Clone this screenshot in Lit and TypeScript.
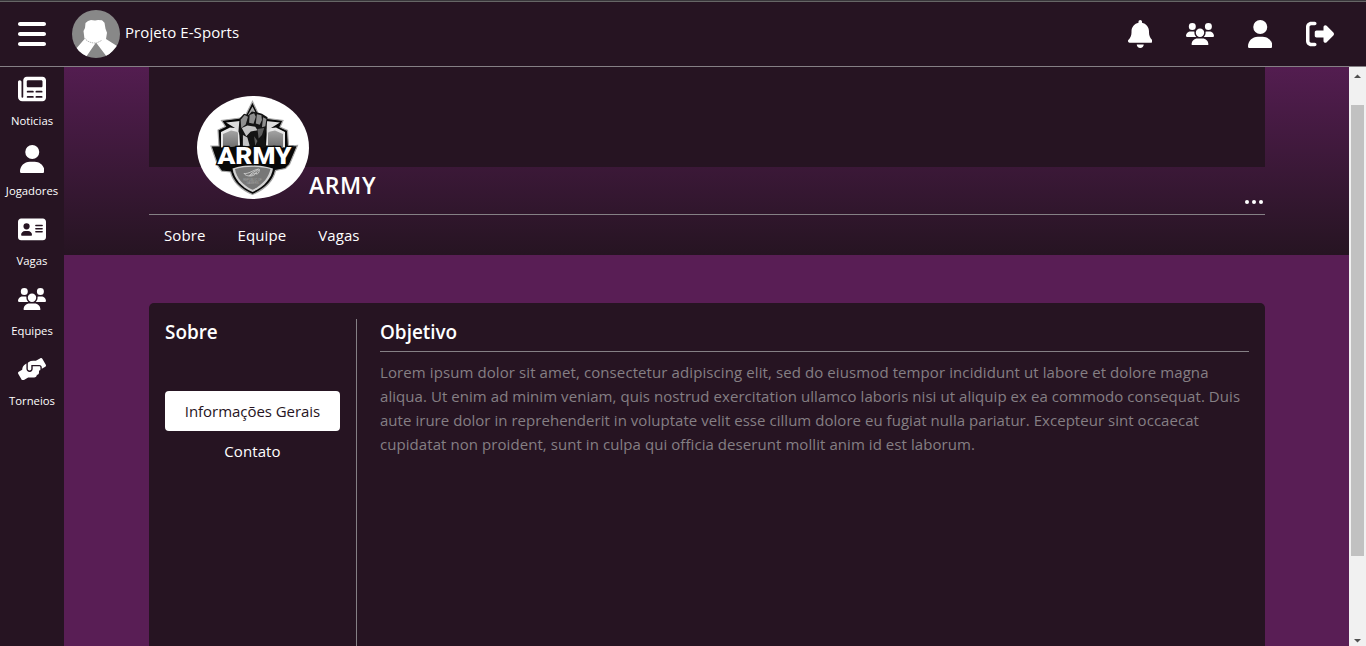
import { LitElement, html, css, svg } from "lit";
import { customElement, property } from "lit/decorators.js";

const ICONS: Record<string, { box: string; d: string }> = {
  bars: {
    box: "0 0 448 512",
    d: "M0 96C0 78.3 14.3 64 32 64H416c17.7 0 32 14.3 32 32s-14.3 32-32 32H32C14.3 128 0 113.7 0 96zM0 256c0-17.7 14.3-32 32-32H416c17.7 0 32 14.3 32 32s-14.3 32-32 32H32c-17.7 0-32-14.3-32-32zM448 416c0 17.7-14.3 32-32 32H32c-17.7 0-32-14.3-32-32s14.3-32 32-32H416c17.7 0 32 14.3 32 32z",
  },
  bell: {
    box: "0 0 448 512",
    d: "M224 0c-17.7 0-32 14.3-32 32V51.2C119 66 64 130.6 64 208v18.8c0 47-17.3 92.4-48.5 127.6l-7.4 8.3c-8.4 9.4-10.4 22.9-5.3 34.4S19.4 416 32 416H416c12.6 0 24-7.4 29.2-18.9s3.1-25-5.3-34.4l-7.4-8.3C401.3 319.2 384 273.9 384 226.8V208c0-77.4-55-142-128-156.8V32c0-17.7-14.3-32-32-32zm45.3 493.3c12-12 18.7-28.3 18.7-45.3H160c0 17 6.7 33.3 18.7 45.3s28.3 18.7 45.3 18.7s33.3-6.7 45.3-18.7z",
  },
  users: {
    box: "0 0 640 512",
    d: "M144 0a80 80 0 1 1 0 160A80 80 0 1 1 144 0zM512 0a80 80 0 1 1 0 160A80 80 0 1 1 512 0zM0 298.7C0 239.8 47.8 192 106.7 192h42.7c15.9 0 31 3.5 44.6 9.7c-1.3 7.2-1.9 14.7-1.9 22.3c0 38.2 16.8 72.5 43.3 96H21.3C9.6 320 0 310.4 0 298.7zM405.3 320h-.7c26.6-23.5 43.3-57.8 43.3-96c0-7.6-.7-15-1.9-22.3c13.6-6.3 28.7-9.7 44.6-9.7h42.7C592.2 192 640 239.8 640 298.7c0 11.8-9.6 21.3-21.3 21.3H405.3zM224 224a96 96 0 1 1 192 0 96 96 0 1 1 -192 0zM128 485.3C128 411.7 187.7 352 261.3 352H378.7C452.3 352 512 411.7 512 485.3c0 14.7-11.9 26.7-26.7 26.7H154.7c-14.7 0-26.7-11.9-26.7-26.7z",
  },
  user: {
    box: "0 0 448 512",
    d: "M224 256A128 128 0 1 0 224 0a128 128 0 1 0 0 256zm-45.7 48C79.8 304 0 383.8 0 482.3C0 498.7 13.3 512 29.7 512H418.3c16.4 0 29.7-13.3 29.7-29.7C448 383.8 368.2 304 269.7 304H178.3z",
  },
  exit: {
    box: "0 0 512 512",
    d: "M377.9 105.9L500.7 228.7c7.2 7.2 11.3 17.1 11.3 27.3s-4.1 20.1-11.3 27.3L377.9 406.1c-6.4 6.4-15 9.9-24 9.9c-18.7 0-33.9-15.2-33.9-33.9l0-62.1-128 0c-17.7 0-32-14.3-32-32l0-64c0-17.7 14.3-32 32-32l128 0 0-62.1c0-18.7 15.2-33.9 33.9-33.9c9 0 17.6 3.6 24 9.9zM160 96L96 96c-17.7 0-32 14.3-32 32l0 256c0 17.7 14.3 32 32 32l64 0c17.7 0 32 14.3 32 32s-14.3 32-32 32l-64 0c-53 0-96-43-96-96L0 128C0 75 43 32 96 32l64 0c17.7 0 32 14.3 32 32s-14.3 32-32 32z",
  },
  news: {
    box: "0 0 512 512",
    d: "M96 96c0-35.3 28.7-64 64-64H448c35.3 0 64 28.7 64 64V416c0 35.3-28.7 64-64 64H80c-44.2 0-80-35.8-80-80V128c0-17.7 14.3-32 32-32s32 14.3 32 32V400c0 8.8 7.2 16 16 16s16-7.2 16-16V96zm64 24v80c0 13.3 10.7 24 24 24H424c13.3 0 24-10.7 24-24V120c0-13.3-10.7-24-24-24H184c-13.3 0-24 10.7-24 24zm16 168a16 16 0 0 0 0 32h96a16 16 0 0 0 0-32zm160 0a16 16 0 0 0 0 32h96a16 16 0 0 0 0-32zM176 384a16 16 0 0 0 0 32h96a16 16 0 0 0 0-32zm160 0a16 16 0 0 0 0 32h96a16 16 0 0 0 0-32z",
  },
  card: {
    box: "0 0 576 512",
    d: "M64 32C28.7 32 0 60.7 0 96V416c0 35.3 28.7 64 64 64H512c35.3 0 64-28.7 64-64V96c0-35.3-28.7-64-64-64H64zm80 256h64c44.2 0 80 35.8 80 80c0 8.8-7.2 16-16 16H80c-8.8 0-16-7.2-16-16c0-44.2 35.8-80 80-80zm-32-96a64 64 0 1 1 128 0 64 64 0 1 1 -128 0zM368 160H496a16 16 0 0 1 0 32H368a16 16 0 0 1 0-32zM368 224H496a16 16 0 0 1 0 32H368a16 16 0 0 1 0-32zM368 288H496a16 16 0 0 1 0 32H368a16 16 0 0 1 0-32z",
  },
  hands: {
    box: "0 0 640 512",
    d: "M488 191.1h-152l0 51.86c0 37.66-27.08 72-64.55 75.77c-43.09 4.333-79.45-29.42-79.45-71.62V126.4l-24.51 14.73C123.2 167.8 96.04 215.7 96.04 267.5L16.04 313.8c-15.25 8.751-20.63 28.38-11.75 43.63l80 138.6c8.875 15.25 28.5 20.5 43.75 11.75l103.4-59.75h136.6c35.25 0 64-28.75 64-64c26.51 0 48-21.49 48-48V288h8c13.25 0 24-10.75 24-24l0-48.9C512 201.8 501.3 191.1 488 191.1zM635.7 154.5l-79.95-138.6c-8.875-15.25-28.5-20.5-43.75-11.75l-103.4 59.75h-62.57c-37.85 0-74.93 10.61-107.1 30.63C229.7 100.4 224 110.6 224 121.6l0 126.4c0 22.13 17.88 40 40 40c22.13 0 40-17.88 40-40V159.1h184c30.93 0 56 25.07 56 56v28.5l80-46.25C639.3 189.4 644.5 169.8 635.7 154.5z",
  },
};

@customElement("fa-icon")
class FaIcon extends LitElement {
  @property() name = "user";
  @property({ type: Number }) size = 28;

  static styles = css`
    :host { display: flex; align-items: center; justify-content: center; color: #fff; }
    svg { display: block; fill: currentColor; fill-rule: evenodd; }
  `;

  render() {
    const icon = ICONS[this.name];
    const [, , w, h] = icon.box.split(" ").map(Number);
    const scale = Math.min(this.size / 512, 28 / w);
    return html`<svg viewBox=${icon.box} width=${w * scale} height=${h * scale}>
      ${svg`<path d=${icon.d}></path>`}
    </svg>`;
  }
}

@customElement("army-logo")
class ArmyLogo extends LitElement {
  static styles = css`
    :host { display: block; }
    svg { display: block; }
    .name { font: 900 23px "Roboto", "Liberation Sans", sans-serif; fill: #fff; stroke: #080808; stroke-width: 2.500; paint-order: stroke; }
    .tiny { font: 2.800px "Liberation Sans", sans-serif; fill: #a2a2a2; text-anchor: middle; }
  `;

  render() {
    return html`<svg width="112" height="103" viewBox="0 0 112 103">
      <defs>
        <linearGradient id="side" x1="0" y1="0" x2="0" y2="1">
          <stop offset="0" stop-color="#a4a4a4" /><stop offset="1" stop-color="#6d6d6d" />
        </linearGradient>
      </defs>
      <ellipse cx="56" cy="51.5" rx="56" ry="51.5" fill="#fff" />
      <path d="M55.500 5.500l7.500 16 23 3-3 6.500 7.500 3.500 1 15.500 9-.500-8 19-4 4-10 2C76 86 67 93.500 55.500 98.500 44 93.500 36 86 33.500 76l-9-1-3.500-5-7-20 8 0-1-16 7.500-3.500-4-6 23-3z" fill="#080808" stroke="#a9a9a9" stroke-width="1.200" />
      <path d="M24 36l9-4.500 9 1 1 17-19 2zM88 36l-9-4.500-9 1-1 17 19 2z" fill="#e8e8e8" />
      <path d="M26 38l8-3.500 7 1.500v14l-15 2zM86 38l-8-3.500-7 1.500v14l15 2z" fill="url(#side)" />
      <path d="M29 26.500l14-1.500-1 14-4-7zM83 26.500l-14-1.500 1 14 4-7z" fill="#dedede" />
      <path d="M55.500 10.500l4.500 9-10 1z" fill="#a8a8a8" />
      <g transform="translate(56 52) scale(1.120 1.180) translate(-56 -52)">
        <path d="M44 27l4-4 4 1 3-3 5 1 4 1 5 3-1 9-2 8 2 8-9 3-14-1 1-8-3-7z" fill="#141414" />
        <path d="M45 28l3.500-4 3 1.500L49.500 32l-4 3zM53 24l4-1.500 1.500 3-2 6-4-1zM59.500 23.500l4 .800.500 4-2 4-3.500-1zM65 26l3 1.500-1 6-3 1z" fill="#8f8f8f" />
        <path d="M46 35l5-2 7 1 2 3-6 1-4 4zM47 41l4 2 2 7-6 1z" fill="#c4c4c4" />
        <path d="M60 36l6-1-2 6-3 3zM57 42l3 4-2 4z" fill="#5e5e5e" />
      </g>
      <path d="M35.500 72.500c13-4.300 27-4.300 40.500 0-1.500 10-9 18.500-20.500 23.500-11.500-5-18.500-13.500-20-23.500z" fill="#d2d2d2" />
      <path d="M38 73c11.500-3 23.500-3 35.500 0-2 9-8 16-18 20.800C45.500 89 39.500 82 38 73z" fill="#777" />
      <text class="name" x="20.500" y="68.300" textLength="74" lengthAdjust="spacingAndGlyphs">ARMY</text>
      <path d="M47 77.500c5 .500 8-3 14.500-4.500-4 3-7.500 4-9 6.500 1 .600 4-2.500 6.500-2.500-1 2-3 3-6 3s-5-1-6-2.500zM59 78c.500-2 1.500-3.500 3.500-4.500-.500 3-1 4.500-3.500 4.500z" fill="none" stroke="#d6d6d6" stroke-width=".8" />
      <text class="tiny" x="55.500" y="85">REPUBLIC OF</text>
      <text class="tiny" x="55.500" y="88">GAMERS</text>
    </svg>`;
  }
}

@customElement("app-root")
class AppRoot extends LitElement {
  static styles = css`
    * { box-sizing: border-box; }
    :host {
      display: flex; flex-direction: column; height: 646px; overflow: hidden;
      background: #591e55; color: #fff;
      font: 15px/24px "Open Sans", "Noto Sans", sans-serif;
    }
    .top {
      flex: none; height: 67px; display: flex; align-items: center;
      background: linear-gradient(#38363a 0 1px, #666 1px 2px, #261422 2px);
      border-bottom: 1px solid #858085; padding: 2px 32px 0 18px;
    }
    .mark { display: block; margin: 0 5px 0 26px; }
    .brand { margin-top: -5px; letter-spacing: 0.08px; }
    .actions { margin-left: auto; display: flex; gap: 32px; }
    .actions fa-icon { width: 28px; height: 28px; }
    .below { flex: 1; min-height: 0; display: flex; }
    .side { width: 64px; flex: none; background: #261422; display: flex; flex-direction: column; padding-top: 8px; }
    .item { height: 70px; font-size: 11.300px; line-height: 18px; text-align: center; white-space: nowrap; }
    .item fa-icon { height: 28px; margin-bottom: 9px; }
    .page { flex: 1; min-width: 0; display: flex; flex-direction: column; }
    .hero { flex: none; height: 188px; padding: 0 84px 0 85px; background: linear-gradient(#531d50, #261422); }
    .cover { height: 100px; background: #261422; }
    .profile { height: 119px; margin-top: -71px; display: flex; align-items: flex-start; padding-left: 48px; border-bottom: 1px solid #858085; }
    .title { margin: 73px 0 0; font-weight: 600; font-size: 23px; line-height: 32px; letter-spacing: 0.6px; }
    .dots { margin: 104px 2px 0 auto; display: flex; gap: 3px; }
    .dots i { width: 4px; height: 4px; border-radius: 50%; background: #fff; }
    .tabs { display: flex; gap: 32px; padding: 8px 15px; letter-spacing: 0.1px; }
    .card { flex: 1; min-height: 0; margin: 48px 84px 0 85px; background: #261422; border-radius: 5px 5px 0 0; padding: 16px 16px 0 16px; display: flex; }
    .menu { width: 192px; flex: none; padding-right: 16px; border-right: 1px solid #858085; display: flex; flex-direction: column; text-align: center; }
    h2 { margin: 0; font-size: 18.900px; font-weight: 600; line-height: 26px; text-align: left; }
    .choice { height: 40px; line-height: 40px; border-radius: 4px; letter-spacing: 0.08px; }
    .active { margin-top: 46px; background: #fff; color: #261422; letter-spacing: -0.05px; }
    .body { flex: 1; padding-left: 24px; margin-left: -1px; }
    .body h2 { height: 33px; border-bottom: 1px solid #858085; }
    .text { margin-top: 8px; color: #857f84; white-space: nowrap; }
    .line { display: block; letter-spacing: 0.095px; }
    .line:nth-child(2) { letter-spacing: 0.057px; }
    .line:nth-child(3) { letter-spacing: 0.038px; }
    .line:nth-child(4) { letter-spacing: 0.066px; }
    .bar { width: 17px; flex: none; background: #f1f1f1; display: flex; flex-direction: column; align-items: center; justify-content: space-between; }
    .bar svg { display: block; fill: #505050; }
    .thumb { width: 13px; height: 451px; background: #c1c1c1; margin: 21px 0 auto; }
  `;

  private links = [
    ["news", "Noticias"], ["user", "Jogadores"], ["card", "Vagas"], ["users", "Equipes"], ["hands", "Torneios"],
  ];

  private lines = [
    "Lorem ipsum dolor sit amet, consectetur adipiscing elit, sed do eiusmod tempor incididunt ut labore et dolore magna",
    "aliqua. Ut enim ad minim veniam, quis nostrud exercitation ullamco laboris nisi ut aliquip ex ea commodo consequat. Duis",
    "aute irure dolor in reprehenderit in voluptate velit esse cillum dolore eu fugiat nulla pariatur. Excepteur sint occaecat",
    "cupidatat non proident, sunt in culpa qui officia deserunt mollit anim id est laborum.",
  ];

  render() {
    return html`
      <header class="top">
        <fa-icon name="bars" size="32"></fa-icon>
        <svg class="mark" width="48" height="48" viewBox="0 0 48 48">
          <clipPath id="disc"><circle cx="24" cy="24" r="24" /></clipPath>
          <g clip-path="url(#disc)">
            <rect width="48" height="48" fill="#888" />
            <path d="M16 11l3-1 4 .500 3-.500 4 .300 2.500 2.500 1 6 1.500 4-1 6.200L45 36 35 47 24 32.500 14 47 3 40l9.500-11-1-8 1.500-3 .500-5z" fill="#fff" />
            <path d="M12.500 28c3 4 7 5.200 12 5l5-2.500" fill="none" stroke="#999" stroke-width=".7" stroke-dasharray="1.500 .700" />
          </g>
        </svg>
        <span class="brand">Projeto E-Sports</span>
        <nav class="actions">
          ${["bell", "users", "user", "exit"].map((n) => html`<fa-icon name=${n}></fa-icon>`)}
        </nav>
      </header>
      <div class="below">
        <nav class="side">
          ${this.links.map(([icon, label]) => html`<div class="item"><fa-icon name=${icon}></fa-icon>${label}</div>`)}
        </nav>
        <main class="page">
          <section class="hero">
            <div class="cover"></div>
            <div class="profile">
              <army-logo></army-logo>
              <h1 class="title">ARMY</h1>
              <div class="dots"><i></i><i></i><i></i></div>
            </div>
            <nav class="tabs"><span>Sobre</span><span>Equipe</span><span>Vagas</span></nav>
          </section>
          <section class="card">
            <aside class="menu">
              <h2>Sobre</h2>
              <div class="choice active">Informações Gerais</div>
              <div class="choice">Contato</div>
            </aside>
            <article class="body">
              <h2>Objetivo</h2>
              <div class="text">${this.lines.map((l) => html`<span class="line">${l}</span>`)}</div>
            </article>
          </section>
        </main>
        <div class="bar">
          <svg width="17" height="17"><path d="M5 11h7L8.500 7.500z" /></svg>
          <div class="thumb"></div>
          <svg width="17" height="17"><path d="M5 10h7L8.500 13.500z" /></svg>
        </div>
      </div>
    `;
  }
}
